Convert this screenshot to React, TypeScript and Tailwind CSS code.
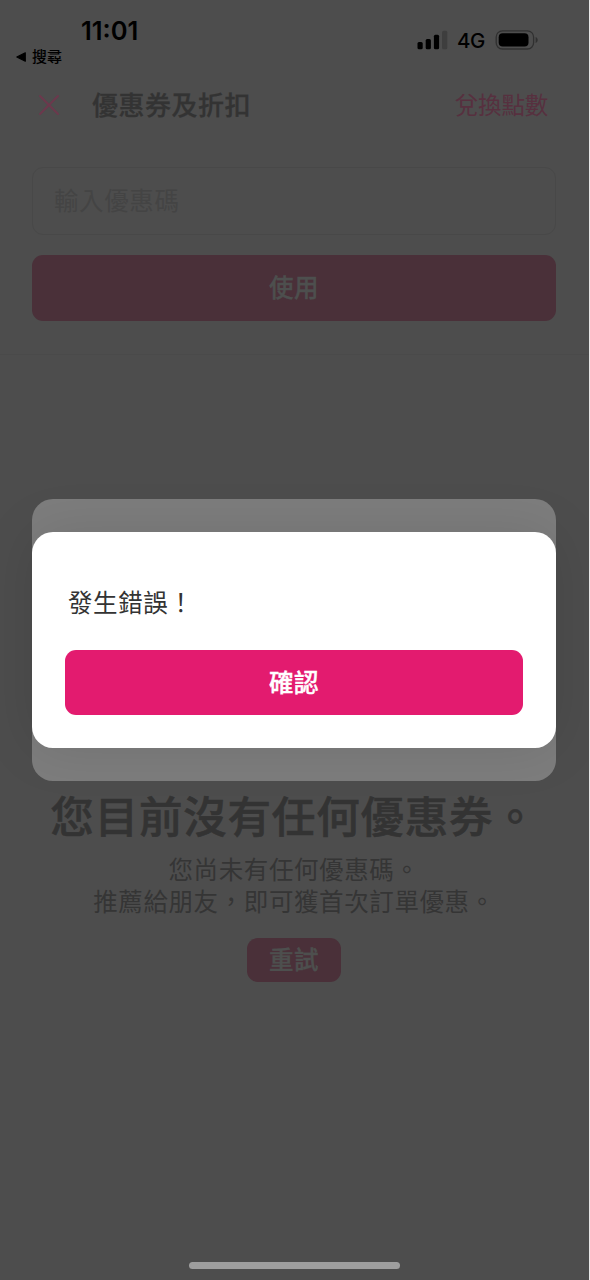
import { X } from "lucide-react";

function SignalIcon(): React.ReactNode {
	return (
		<svg className="h-5 w-8" viewBox="0 0 32 20" fill="#000">
			<rect x="0.5" y="12" width="5.2" height="7.2" rx="1.5" />
			<rect x="8.7" y="9" width="5.2" height="10.2" rx="1.5" />
			<rect x="16.9" y="4.7" width="5.2" height="14.5" rx="1.5" />
			<rect x="25.1" y="0.7" width="5.2" height="18.5" rx="1.5" fill="#3e3e3e" />
		</svg>
	);
}

function BatteryIcon(): React.ReactNode {
	return (
		<svg className="h-5 w-11" viewBox="0 0 44 20">
			<rect x="1.2" y="0.8" width="37.4" height="18.2" rx="6.2" fill="none" stroke="#303030" strokeWidth="1.3" />
			<rect x="3.7" y="3.2" width="29.8" height="13.4" rx="4" fill="#000" />
			<path d="M40.6 7v6c1.3-.5 2.1-1.7 2.1-3s-.8-2.5-2.1-3Z" fill="#303030" />
		</svg>
	);
}

function StatusBar(): React.ReactNode {
	return (
		<div className="flex h-[72px] justify-between text-black">
			<div className="pl-4">
				<p className="mt-[17px] pl-[65px] font-[Inter] text-[25.5px] leading-7 font-semibold">11:01</p>
				<div className="mt-px flex items-center gap-1.5">
					<svg className="mt-px h-2.5 w-2.5" viewBox="0 0 10 10">
						<path d="M.8 5 9.3.8v8.400Z" fill="#000" stroke="#000" strokeWidth="1.1" strokeLinejoin="round" />
					</svg>
					<span className="text-[15px] leading-5 font-medium">搜尋</span>
				</div>
			</div>
			<div className="mt-[30px] flex h-5 items-center pr-[50px]">
				<SignalIcon />
				<span className="mt-0.5 ml-2 w-[38px] font-[Inter] text-[20.5px] leading-5 font-medium tracking-[-0.4px]">4G</span>
				<BatteryIcon />
			</div>
		</div>
	);
}

function Header(): React.ReactNode {
	return (
		<header className="flex h-16 items-center pr-[41px] pl-[31px]">
			<X className="mt-px h-9 w-9 text-[#6c384d]" strokeWidth={1.3} />
			<h1 className="-mt-0.5 ml-[25px] text-[26px] font-medium tracking-[0.5px] text-[#333] [-webkit-text-stroke:0.3px]">
				優惠券及折扣
			</h1>
			<span className="mt-0.5 ml-auto text-[23.5px] tracking-[-0.2px] text-[#57303f]">兌換點數</span>
		</header>
	);
}

function ErrorDialog(): React.ReactNode {
	return (
		<div className="absolute top-[499px] left-8 h-[282px] w-[524px] rounded-[21px] bg-[#7d7d7d] py-[33px]">
			<div className="h-[216px] rounded-[21px] bg-white px-[33px] pt-[54px] shadow-[0_0_56px_rgba(0,0,0,0.1)]">
				<p className="pl-[3px] text-[24.5px] leading-8 tracking-[0.6px] text-[#333]">發生錯誤！</p>
				<button className="mt-8 h-[65px] w-full rounded-[11px] bg-[#e31b6f] pb-px text-[24.5px] font-medium tracking-[0.6px] text-white [-webkit-text-stroke:0.4px]">
					確認
				</button>
			</div>
		</div>
	);
}

export default function App(): React.ReactNode {
	return (
		<div className="h-[1280px] w-[590px] bg-[#e8e8e8] font-['Noto_Sans_CJK_TC',sans-serif]">
			<div className="relative flex h-full w-[589px] flex-col overflow-hidden bg-[#4d4d4d]">
				<StatusBar />
				<Header />

				<section className="h-[219px] border-b border-[#4a4a4a] pt-[31px] pr-[33px] pl-8">
					<div className="flex h-[68px] items-center rounded-[11px] border border-[#484848] px-[21px] pb-0.5 text-[24.5px] tracking-[0.6px] text-[#444]">
						輸入優惠碼
					</div>
					<button className="mt-5 h-[66px] w-full rounded-[11px] bg-[#4a3039] pb-0.5 text-[24.5px] font-medium tracking-[0.6px] text-[#4d4f4e] [-webkit-text-stroke:0.4px]">
						使用
					</button>
				</section>

				{/* Empty coupon list */}
				<section className="mt-[428px] flex flex-col items-center text-center text-[#353535]">
					<h2 className="mr-px text-[43.5px] leading-[64px] font-medium tracking-[0.8px] whitespace-nowrap text-[#333] [-webkit-text-stroke:0.6px]">
						您目前沒有任何優惠券。
					</h2>
					<div className="mt-1.5 mr-px text-[24.5px] leading-8 tracking-[0.6px] whitespace-nowrap">
						<p>您尚未有任何優惠碼。</p>
						<p>推薦給朋友，即可獲首次訂單優惠。</p>
					</div>
					<button className="mt-[21px] mr-px h-11 w-[94px] rounded-[11px] bg-[#4a3039] pb-px text-[24.5px] font-medium tracking-[0.6px] text-[#4d4f4e] [-webkit-text-stroke:0.4px]">
						重試
					</button>
				</section>

				<div className="mt-auto mr-px mb-[11px] h-[7px] w-[211px] self-center rounded-full bg-[#9e9e9e]" />
				<ErrorDialog />
			</div>
		</div>
	);
}
